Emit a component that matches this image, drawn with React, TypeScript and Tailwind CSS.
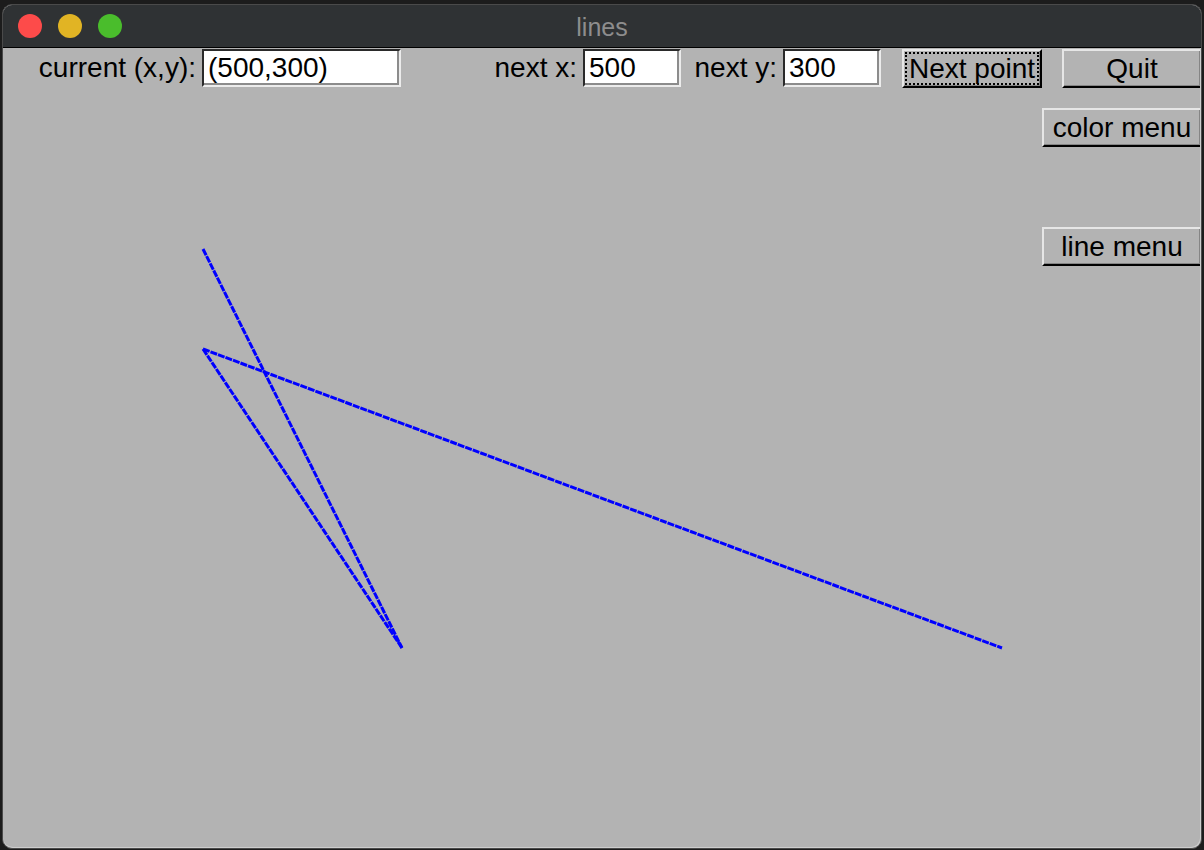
import React from 'react';

const font = { fontFamily: '"Liberation Sans", Arial, sans-serif' };

function Field({ value, width }: { value: string; width: string }) {
  return (
    <div
      className={`${width} shrink-0 h-[38px] bg-white border-2 border-t-[#2a2a2a] border-l-[#2a2a2a] border-b-[#ececec] border-r-[#ececec] shadow-[inset_-2px_-2px_0_#8c8c8c] pl-[4px] text-[28px] leading-[34px] text-black overflow-hidden whitespace-nowrap`}
    >
      {value}
    </div>
  );
}

function TkButton({ label, width, focused }: { label: string; width: string; focused?: boolean }) {
  return (
    <button
      className={`${width} shrink-0 h-[39px] bg-[#b3b3b3] border-2 border-t-[#e6e6e6] border-l-[#e6e6e6] border-b-black border-r-black shadow-[inset_-1px_-1px_0_#858585] text-[28px] leading-[34px] text-black text-center whitespace-nowrap ${
        focused ? 'outline-2 outline-dotted outline-black outline-offset-[-5px]' : ''
      }`}
    >
      {label}
    </button>
  );
}

export default function App() {
  return (
    <div className="relative w-[1204px] h-[850px] bg-[#1c1c1c] overflow-hidden" style={font}>
      <div className="pt-[4px] pl-[2px]">
        <div className="w-[1200px] h-[845px] rounded-[10px] overflow-hidden border border-[#4a4a4a] flex flex-col bg-[#b3b3b3]">
          {/* title bar */}
          <div className="relative h-[43px] shrink-0 bg-[#2f3234] border-b border-black flex items-center">
            <div className="flex items-center gap-[16px] pl-[15px]">
              <span className="w-[24px] h-[24px] rounded-full bg-[#fd4b4a]" />
              <span className="w-[24px] h-[24px] rounded-full bg-[#e1b424]" />
              <span className="w-[24px] h-[24px] rounded-full bg-[#4abd2c]" />
            </div>
            <div className="absolute inset-0 flex items-center justify-center pt-[3px] text-[25px] text-[#8d8d8d]">
              lines
            </div>
          </div>

          {/* content */}
          <div className="flex-1 flex flex-col border-r border-b border-[#cdcdcd] rounded-b-[10px] overflow-hidden">
            <div className="flex items-start pt-[1px] text-[28px] leading-[38px] text-black">
              <div className="w-[199px] shrink-0 text-right pr-[6px] whitespace-nowrap">current (x,y):</div>
              <Field value="(500,300)" width="w-[199px]" />
              <div className="w-[182px] shrink-0 text-right pr-[6px] whitespace-nowrap">next x:</div>
              <Field value="500" width="w-[98px]" />
              <div className="w-[102px] shrink-0 text-right pr-[6px] whitespace-nowrap">next y:</div>
              <Field value="300" width="w-[98px]" />
              <div className="ml-[21px] shrink-0">
                <TkButton label="Next point" width="w-[140px]" focused />
              </div>
              <div className="ml-[20px] shrink-0">
                <TkButton label="Quit" width="w-[140px]" />
              </div>
            </div>

            <div className="self-end flex flex-col mr-[-2px]">
              <div className="mt-[20px]">
                <TkButton label="color menu" width="w-[160px]" />
              </div>
              <div className="mt-[80px]">
                <TkButton label="line menu" width="w-[160px]" />
              </div>
            </div>
          </div>
        </div>
      </div>

      {/* canvas drawing */}
      <svg className="absolute inset-0 pointer-events-none" width="1204" height="850" viewBox="0 0 1204 850">
        <g stroke="#0000ff" strokeWidth="3" strokeDasharray="7 1" fill="none" strokeLinecap="butt">
          <line x1="203" y1="249" x2="402" y2="648" />
          <line x1="203" y1="349" x2="402" y2="648" />
          <line x1="203" y1="349" x2="1002" y2="648" />
        </g>
      </svg>
    </div>
  );
}
